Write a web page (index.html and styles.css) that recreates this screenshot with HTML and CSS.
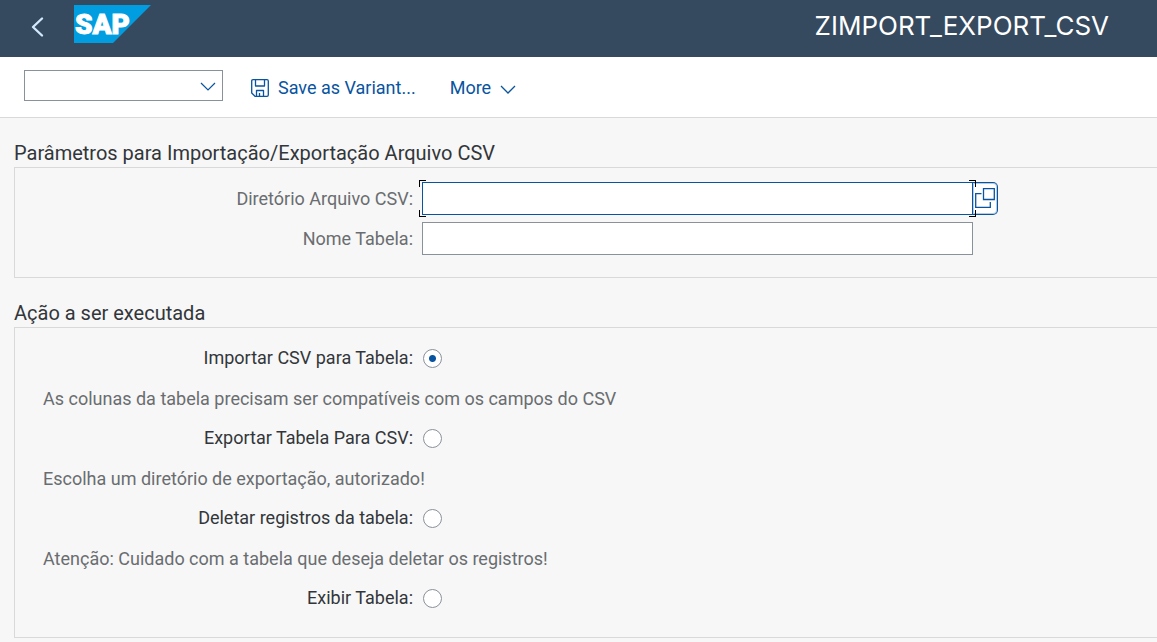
FILE: index.html
```html
<!DOCTYPE html>
<html lang="pt">
<head>
<meta charset="utf-8">
<meta name="viewport" content="width=device-width, initial-scale=1">
<title>ZIMPORT_EXPORT_CSV</title>
<link rel="stylesheet" href="styles.css">
</head>
<body>
<header class="shell">
  <button class="back" type="button" aria-label="Back">
    <svg width="14" height="22" viewBox="0 0 14 22" fill="none" stroke="#d1e8ff" stroke-width="2.4" stroke-linecap="round" stroke-linejoin="round"><path d="M12 2.500 3 11l9 8.500"/></svg>
  </button>
  <svg class="logo" width="77" height="38" viewBox="0 0 77 38" role="img" aria-label="SAP">
    <path d="M0 0h77L39 38H0z" fill="#009de0"/>
    <text class="logo-text" x="1" y="29">SAP</text>
  </svg>
  <h1 class="shell-title">ZIMPORT_EXPORT_CSV</h1>
</header>
<div class="toolbar">
  <div class="combo">
    <select class="combo-select" aria-label="Command"><option></option></select>
    <svg class="combo-arrow" width="16" height="10" viewBox="0 0 16 10" fill="none" stroke="#0854a0" stroke-width="1.200"><path d="m1 1 7 7 7-7"/></svg>
  </div>
  <button class="tool save" type="button">
    <svg width="18" height="18" viewBox="0 0 18 18" fill="none" stroke="#0854a0" stroke-width="1.300" stroke-linejoin="round"><path d="M2 .7h14q1.300 0 1.300 1.300v14q0 1.300-1.300 1.300H4L.7 14V2Q.7.700 2 .7z"/><path d="M4.500 1v6h9V1M5.500 17v-5.500h7V17M8.500 17v-3"/></svg>
    <span>Save as Variant...</span>
  </button>
  <button class="tool" type="button">
    <span>More</span>
    <svg class="more-arrow" width="16" height="10" viewBox="0 0 16 10" fill="none" stroke="#0854a0" stroke-width="1.300"><path d="m1 1 7 7 7-7"/></svg>
  </button>
</div>
<main class="content">
  <section class="group">
    <h2 class="group-title">Parâmetros para Importação/Exportação Arquivo CSV</h2>
    <div class="group-box">
      <div class="row">
        <label class="label muted" for="dir">Diretório Arquivo CSV:</label>
        <div class="field focused">
          <input class="input" id="dir" type="text">
          <i class="corner tl"></i><i class="corner tr"></i><i class="corner bl"></i><i class="corner br"></i>
        </div>
        <button class="help" type="button" aria-label="Value help">
          <svg width="20" height="20" viewBox="0 0 20 20" fill="none" stroke="#0854a0" stroke-width="1.300"><path d="M8.500.700h10.800v10.800H8.500zM6.500 5.700H.7v13.600h14.600v-5.300"/></svg>
        </button>
      </div>
      <div class="row">
        <label class="label muted" for="tab">Nome Tabela:</label>
        <div class="field"><input class="input" id="tab" type="text"></div>
      </div>
    </div>
  </section>
  <section class="group">
    <h2 class="group-title">Ação a ser executada</h2>
    <div class="group-box">
      <div class="row"><label class="label" for="a1">Importar CSV para Tabela:</label><input class="radio" type="radio" name="action" id="a1" checked></div>
      <p class="row note">As colunas da tabela precisam ser compatíveis com os campos do CSV</p>
      <div class="row"><label class="label" for="a2">Exportar Tabela Para CSV:</label><input class="radio" type="radio" name="action" id="a2"></div>
      <p class="row note">Escolha um diretório de exportação, autorizado!</p>
      <div class="row"><label class="label" for="a3">Deletar registros da tabela:</label><input class="radio" type="radio" name="action" id="a3"></div>
      <p class="row note">Atenção: Cuidado com a tabela que deseja deletar os registros!</p>
      <div class="row"><label class="label" for="a4">Exibir Tabela:</label><input class="radio" type="radio" name="action" id="a4"></div>
    </div>
  </section>
</main>
</body>
</html>
```
FILE: styles.css
```css
* { box-sizing: border-box; }
body {
  margin: 0;
  background: #f7f7f7;
  color: #32363a;
  font-family: Roboto, "Liberation Sans", sans-serif;
  font-size: 18px;
  line-height: 24px;
}
button {
  padding: 0;
  border: 0;
  background: none;
  color: inherit;
  font: inherit;
}
.shell {
  display: flex;
  align-items: center;
  height: 57px;
  padding: 0 48px 6px 30px;
  background: #354a5f;
}
.back { display: flex; padding-top: 2px; }
.logo { margin: 0 auto 4px 30px; }
.logo-text {
  fill: #fff;
  stroke: #fff;
  stroke-width: 1px;
  font-size: 28px;
  font-weight: 900;
}
.shell-title {
  margin: 0;
  color: #fff;
  font-family: Inter, "Open Sans", sans-serif;
  font-size: 26px;
  font-weight: 400;
  line-height: 32px;
}
.toolbar {
  display: flex;
  align-items: center;
  height: 61px;
  padding: 0 24px;
  border-bottom: 1px solid #d9d9d9;
  background: #fff;
}
.combo {
  position: relative;
  width: 199px;
  margin: 0 28px 4px 0;
}
.combo-select {
  display: block;
  width: 100%;
  height: 31px;
  border: 1px solid #89919a;
  border-radius: 0;
  background: #fff;
  appearance: none;
}
.combo-arrow {
  position: absolute;
  top: 12px;
  right: 7px;
  pointer-events: none;
}
.tool {
  display: flex;
  align-items: center;
  gap: 9px;
  padding-top: 2px;
  color: #0854a0;
}
.more-arrow { margin-top: 3px; }
.save { margin-right: 34px; }
.content { padding: 22px 0 4px 14px; }
.group { margin-bottom: 22px; }
.group:last-child { margin-bottom: 0; }
.group-title {
  margin: 0 0 1px;
  font-size: 20px;
  font-weight: 400;
  line-height: 26px;
}
.group-box {
  padding: 10px 0 19px;
  border: 1px solid #d9d9d9;
  border-right: 0;
}
.row {
  display: flex;
  align-items: center;
  height: 40px;
  margin: 0;
}
.label {
  flex: none;
  width: 398px;
  margin-right: 9px;
  text-align: right;
}
.muted, .note {
  padding-top: 2px;
  color: #6a6d70;
}
.note { padding-left: 28px; }
.field {
  position: relative;
  flex: 0 1 551px;
}
.input {
  display: block;
  width: 100%;
  height: 33px;
  padding: 0 8px;
  border: 1px solid #89919a;
  border-radius: 0;
  background: #fff;
  font: inherit;
  outline: 0;
}
.focused .input { border-color: #0854a0; }
.corner {
  position: absolute;
  width: 7px;
  height: 7px;
  border: 0 solid #000;
}
.tl { top: -2px; left: -3px; border-width: 1px 0 0 1px; }
.tr { top: -2px; right: -3px; border-width: 1px 1px 0 0; }
.bl { bottom: -2px; left: -3px; border-width: 0 0 1px 1px; }
.br { bottom: -2px; right: -3px; border-width: 0 1px 1px 0; }
.help {
  display: flex;
  align-items: center;
  justify-content: center;
  width: 25px;
  height: 33px;
  border: 1px solid #0854a0;
  border-left: 0;
  border-radius: 0 5px 5px 0;
  box-shadow: inset 0 0 0 1px #b5cbe2;
  background: #fff;
}
.radio {
  width: 19px;
  height: 19px;
  margin: 1px 0 0 1px;
  border: 1px solid #89919a;
  border-radius: 50%;
  background: #fff;
  appearance: none;
}
.radio:checked { background: radial-gradient(circle, #0854a0 3px, #fff 4px); }
```
